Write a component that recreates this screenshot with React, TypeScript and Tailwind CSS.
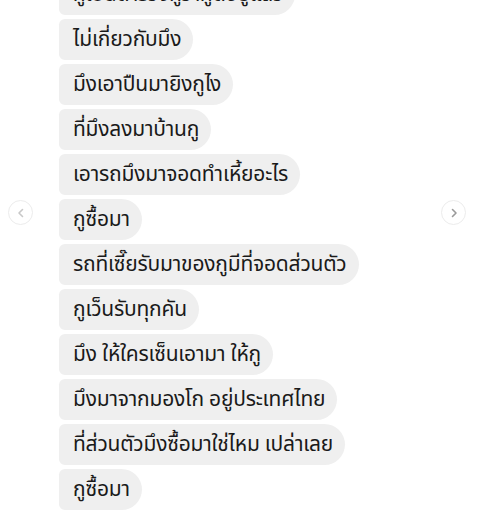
import React from "react";

const messages = [
  "กูเป็นตำรวจกูว่ากูต่อยู่แล้ว",
  "ไม่เกี่ยวกับมึง",
  "มึงเอาปืนมายิงกูไง",
  "ที่มึงลงมาบ้านกู",
  "เอารถมึงมาจอดทำเหี้ยอะไร",
  "กูซื้อมา",
  "รถที่เซี๊ยรับมาของกูมีที่จอดส่วนตัว",
  "กูเว็นรับทุกคัน",
  "มึง ให้ใครเซ็นเอามา ให้กู",
  "มึงมาจากมองโก อยู่ประเทศไทย",
  "ที่ส่วนตัวมึงซื้อมาใช่ไหม เปล่าเลย",
  "กูซื้อมา",
];

export default function App() {
  return (
    <div
      className="relative w-[482px] h-[511px] overflow-hidden bg-white"
      style={{ fontFamily: '"Noto Sans Thai", "Noto Sans", "DejaVu Sans", sans-serif' }}
    >
      <div className="flex flex-col items-start gap-[4px] pl-[59px] mt-[-26px]">
        {messages.map((m, i) => (
          <div
            key={i}
            className="h-[41px] flex items-center pl-[14px] pr-[12px] bg-[#efefef] text-[#1a1a1a] text-[21px] tracking-[-0.2px] rounded-l-[6px] rounded-r-[21px] whitespace-nowrap"
          >
            {m}
          </div>
        ))}
      </div>
      <div className="absolute left-[8px] top-[200px] w-[25px] h-[25px] rounded-full border border-[#ececec] flex items-center justify-center">
        <svg width="10" height="10" viewBox="0 0 10 10" fill="none" stroke="#c8c8c8" strokeWidth="1.6" strokeLinecap="round" strokeLinejoin="round">
          <path d="M6.5 1.5 L3 5 L6.5 8.5" />
        </svg>
      </div>
      <div className="absolute left-[441px] top-[200px] w-[25px] h-[25px] rounded-full border border-[#ececec] flex items-center justify-center">
        <svg width="10" height="10" viewBox="0 0 10 10" fill="none" stroke="#9a9a9a" strokeWidth="1.6" strokeLinecap="round" strokeLinejoin="round">
          <path d="M3.5 1.5 L7 5 L3.5 8.5" />
        </svg>
      </div>
    </div>
  );
}
